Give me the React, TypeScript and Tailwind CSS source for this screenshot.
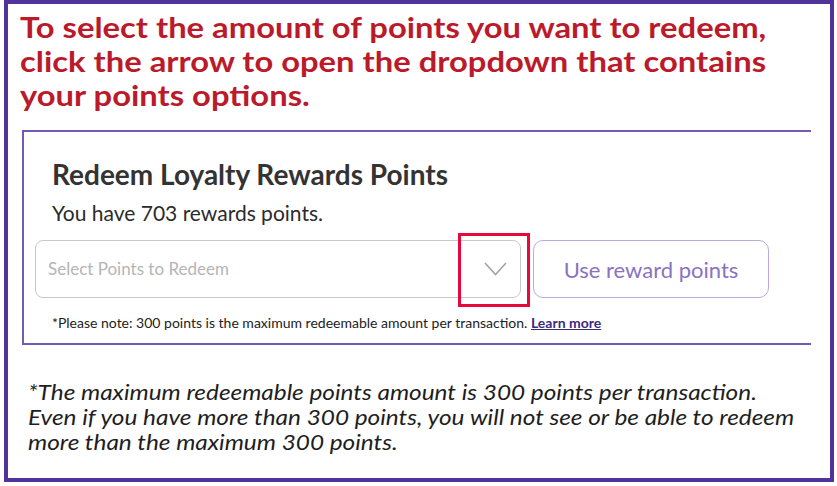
import React from "react";

export default function App() {
  return (
    <div className="w-[837px] h-[486px] bg-white overflow-hidden" style={{ fontFamily: "Lato, 'Noto Sans', sans-serif" }}>
      <div className="ml-[4px] w-[830px] h-[482px] border-[4px] border-[#50349a] box-border">
        <div className="pl-[12px] pt-[6px]">
          <div className="w-fit origin-left scale-x-[1.17] text-[28px] leading-[34px] font-bold text-[#bb1a2b] whitespace-nowrap">
            To select the amount of points you want to redeem,
            <br />
            click the arrow to open the dropdown that contains
            <br />
            your points options.
          </div>
        </div>
        <div className="ml-[14px] mt-[18px] w-[789px] h-[215px] border-l-2 border-t-2 border-b-2 border-[#7459b5] box-border pt-[26px] pl-[11px]">
          <div className="ml-[17px] text-[28px] leading-[32px] font-bold text-[#333333] whitespace-nowrap">
            Redeem Loyalty Rewards Points
          </div>
          <div className="ml-[17px] mt-[11px] text-[21px] leading-[24px] text-[#2b2b2b] whitespace-nowrap">
            You have 703 rewards points.
          </div>
          <div className="mt-[15px] flex gap-[12px]">
            <div className="relative w-[486px] h-[58px] rounded-[8px] border border-[#c9c9c9] flex items-center justify-between pl-[12px] pr-[13px]">
              <span className="text-[17px] text-[#b5b5b5]">Select Points to Redeem</span>
              <svg width="23" height="14" viewBox="0 0 23 14" fill="none">
                <path d="M1 1 L11.5 12.5 L22 1" stroke="#a3a3a3" strokeWidth="1.6" />
              </svg>
              <div className="absolute left-[422px] top-[-8px] w-[72px] h-[74px] border-[3px] border-[#e8083e]" />
            </div>
            <div className="w-[236px] h-[58px] rounded-[10px] border border-[#bcaadf] flex items-center justify-center text-[22px] text-[#8a72c2]">
              Use reward points
            </div>
          </div>
          <div className="ml-[17px] mt-[17px] text-[14px] leading-[16px] text-[#222] whitespace-nowrap">
            *Please note: 300 points is the maximum redeemable amount per transaction.{" "}
            <span className="font-bold text-[#3c2a7d] underline">Learn more</span>
          </div>
        </div>
        <div className="pl-[20px] mt-[34px]">
          <div className="w-fit origin-left scale-x-[1.16] text-[21px] leading-[25.2px] italic text-[#1e1e1e] whitespace-nowrap">
            *The maximum redeemable points amount is 300 points per transaction.
            <br />
            Even if you have more than 300 points, you will not see or be able to redeem
            <br />
            more than the maximum 300 points.
          </div>
        </div>
      </div>
    </div>
  );
}
